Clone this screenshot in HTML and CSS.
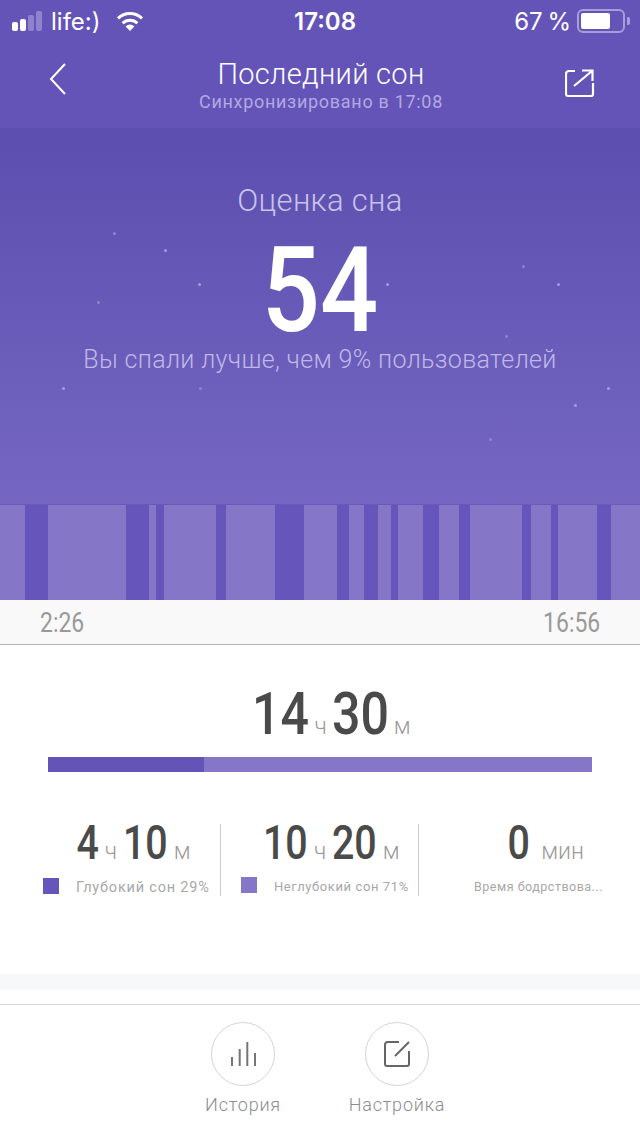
FILE: index.html
```html
<!DOCTYPE html>
<html lang="ru">
  <head>
    <meta charset="UTF-8" />
    <title>Последний сон</title>
    <link rel="stylesheet" href="styles.css">
  </head>
  <body>
    <div class="status">
      <div class="statusLeft">
        <div class="signal"><i></i><i></i><i class="off"></i><i class="off"></i></div>
        <span>life:)</span>
        <svg class="wifi" width="30" height="22" viewBox="0 0 30 22">
          <path d="M15 21l-4.4-4.6a6.2 6.2 0 0 1 8.8 0z" fill="#fff"/>
          <path d="M7.6 13.2a10.5 10.5 0 0 1 14.8 0" fill="none" stroke="#fff" stroke-width="3"/>
          <path d="M3 8.4a17 17 0 0 1 24 0" fill="none" stroke="#fff" stroke-width="3"/>
        </svg>
      </div>
      <div class="clock">17:08</div>
      <div class="statusRight">
        <span class="percent">67 %</span>
        <div class="battery"><div class="charge"></div></div>
        <div class="nub"></div>
      </div>
    </div>

    <div class="nav">
      <svg width="24" height="36" viewBox="0 0 24 36"><path d="M18 3L4 18l14 15" fill="none" stroke="#fff" stroke-width="2"/></svg>
      <div class="navTitle">
        <h1>Последний сон</h1>
        <p>Синхронизировано в 17:08</p>
      </div>
      <svg class="share" width="30" height="30" viewBox="0 0 30 30">
        <path d="M10 3H4a3 3 0 0 0-3 3v20a2 2 0 0 0 2 2h23a2 2 0 0 0 2-2V15" fill="none" stroke="#fff" stroke-width="2.2"/>
        <path d="M9 18L27 3M17 2.5h10.5V13" fill="none" stroke="#fff" stroke-width="2.2"/>
      </svg>
    </div>

    <div class="hero">
      <i class="star faint" style="left:113px;top:232px"></i>
      <i class="star" style="left:164px;top:249px"></i>
      <i class="star" style="left:198px;top:283px"></i>
      <i class="star faint" style="left:97px;top:301px"></i>
      <i class="star" style="left:386px;top:283px"></i>
      <i class="star faint" style="left:522px;top:265px"></i>
      <i class="star" style="left:557px;top:283px"></i>
      <i class="star faint" style="left:505px;top:335px"></i>
      <i class="star" style="left:62px;top:387px"></i>
      <i class="star faint" style="left:199px;top:387px"></i>
      <i class="star" style="left:574px;top:404px"></i>
      <i class="star" style="left:607px;top:387px"></i>
      <i class="star faint" style="left:489px;top:438px"></i>
      <h2>Оценка сна</h2>
      <div class="score">54</div>
      <p>Вы спали лучше, чем 9% пользователей</p>
    </div>

    <div class="chart" id="chart"></div>

    <div class="times"><span>2:26</span><span class="timeEnd">16:56</span></div>

    <div class="summary">
      <div class="total"><b>14</b><small>ч</small><b>30</b><small>м</small></div>
      <div class="ratio"><div class="ratioDeep"></div></div>
      <div class="cols">
        <div class="col colFirst">
          <div class="val"><b class="one">4</b><small>ч</small><b>10</b><small>м</small></div>
          <div class="legend"><i class="sq"></i><span>Глубокий сон 29%</span></div>
        </div>
        <div class="col colMid">
          <div class="val"><b>10</b><small>ч</small><b>20</b><small>м</small></div>
          <div class="legend"><i class="sq sqLight"></i><span>Неглубокий сон 71%</span></div>
        </div>
        <div class="col colLast">
          <div class="val valLast"><b class="one">0</b><small class="min">мин</small></div>
          <div class="legend legendLast"><span>Время бодрствова...</span></div>
        </div>
      </div>
    </div>

    <div class="strip"></div>

    <div class="actions">
      <div class="action">
        <div class="circle">
          <svg width="26" height="26" viewBox="0 0 26 26"><path d="M2 16v9M9.700 8v17M17.300 1v24M25 12v13" fill="none" stroke="#757575" stroke-width="2"/></svg>
        </div>
        <span>История</span>
      </div>
      <div class="action">
        <div class="circle">
          <svg width="28" height="28" viewBox="0 0 28 28">
            <path d="M16 2H5a3 3 0 0 0-3 3v19a2 2 0 0 0 2 2h20a2 2 0 0 0 2-2V11" fill="none" stroke="#666" stroke-width="2"/>
            <path d="M12 16L26 2" fill="none" stroke="#666" stroke-width="2"/>
          </svg>
        </div>
        <span>Настройка</span>
      </div>
    </div>

    <script>
      // light / dark stretches of the sleep chart, in px
      const parts = [25,23,78,23,7,8,52,10,49,29,33,12,15,14,13,7,25,16,20,11,52,9,20,7,39,14,29];
      const chart = document.getElementById("chart");
      parts.forEach((w, i) => {
        const seg = document.createElement("div");
        seg.className = i % 2 ? "seg dark" : "seg";
        seg.style.width = w + "px";
        chart.append(seg);
      });
    </script>
  </body>
</html>
```

FILE: styles.css
```css
* {
  box-sizing: border-box;
}
body {
  margin: 0;
  width: 640px;
  height: 1136px;
  overflow: hidden;
  background: #fff;
  font-family: Roboto, "Noto Sans", sans-serif;
  position: relative;
}
h1, h2, p {
  margin: 0;
  font-weight: normal;
}

/* status bar */
.status {
  height: 40px;
  background: #6454b8;
  color: #fff;
  display: grid;
  grid-template-columns: 1fr auto 1fr;
  align-items: center;
  padding: 2px 10px 0 12px;
  font-family: Inter, Roboto, sans-serif;
  font-size: 24px;
}
.statusLeft, .statusRight {
  display: flex;
  align-items: center;
}
.statusRight {
  justify-content: flex-end;
}
.percent {
  word-spacing: -2px;
}
.signal {
  display: flex;
  align-items: flex-end;
  gap: 2px;
  margin-right: 9px;
}
.signal i {
  display: block;
  width: 6px;
  border-radius: 2px;
  background: #fff;
  height: 9px;
}
.signal i:nth-child(2) { height: 12px; }
.signal i:nth-child(3) { height: 16px; }
.signal i:nth-child(4) { height: 20px; }
.signal .off {
  background: #8f83cf;
}
.wifi {
  margin-left: 15px;
}
.clock {
  font-weight: 600;
  margin-left: 8px;
}
.battery {
  width: 48px;
  height: 24px;
  margin-left: 6px;
  border: 2px solid #a79dda;
  border-radius: 6px;
  padding: 2px;
}
.charge {
  width: 29px;
  height: 100%;
  background: #fff;
  border-radius: 2px;
}
.nub {
  width: 3px;
  height: 8px;
  background: #a79dda;
  border-radius: 0 2px 2px 0;
  margin-left: 2px;
}

/* title */
.nav {
  height: 88px;
  background: #6454b8;
  display: flex;
  justify-content: space-between;
  align-items: center;
  padding: 0 45px 10px 47px;
}
.share {
  margin-top: 8px;
}
.navTitle {
  text-align: center;
  color: #fff;
  margin: 12px 0 0 6px;
}
.navTitle h1 {
  font-size: 29px;
  line-height: 34px;
  font-weight: 300;
  letter-spacing: 0.3px;
}
.navTitle p {
  font-size: 18px;
  line-height: 22px;
  color: #b2a9e1;
  letter-spacing: 0.7px;
}

/* score */
.hero {
  height: 376px;
  background: linear-gradient(#5b4eae, #7566c2);
  text-align: center;
  color: #c9c2ec;
  padding-top: 55px;
}
.hero h2 {
  font-size: 31px;
  line-height: 36px;
  font-weight: 300;
  letter-spacing: 0.3px;
}
.score {
  font-size: 119px;
  font-weight: 500;
  line-height: 96px;
  color: #fff;
  margin: 24px 0 6px;
  transform: scaleX(0.86);
}
.hero p {
  font-size: 25px;
  line-height: 30px;
  font-weight: 300;
  letter-spacing: 0.35px;
  color: #c0b8e8;
}
.star {
  position: absolute;
  width: 3px;
  height: 3px;
  border-radius: 50%;
  background: #a79dda;
}
.faint {
  background: #8f83cf;
}

/* chart */
.chart {
  display: flex;
  height: 96px;
  border-top: 1px solid #6a5abb;
}
.seg {
  background: #8576c8;
}
.dark {
  background: #6656bb;
}
.times {
  height: 45px;
  background: #f9f9f9;
  border-bottom: 1px solid #b4b4b4;
  display: flex;
  justify-content: space-between;
  align-items: center;
  padding: 1px 40px 0;
  font-size: 27px;
  color: #999;
}
.times span {
  transform: scaleX(0.85);
  transform-origin: left;
}
.times .timeEnd {
  transform-origin: right;
}

/* durations */
.summary {
  height: 329px;
  padding: 35px 48px 0;
  color: #4a4a4a;
}
.total, .val {
  display: flex;
  justify-content: center;
  align-items: baseline;
}
.total {
  height: 68px;
  padding-left: 28px;
}
b {
  display: inline-block;
  font-weight: 500;
}
.total b {
  font-size: 59px;
  line-height: 68px;
  transform: scaleX(0.85);
  margin: 0 -5px;
}
small {
  font-weight: 300;
  color: #9b9b9b;
  margin: 0 5px;
}
.total small {
  font-size: 23px;
}
.ratio {
  height: 15px;
  background: #8576c8;
  margin-top: 9px;
}
.ratioDeep {
  width: 156px;
  height: 100%;
  background: #6454b8;
}
.cols {
  display: flex;
  margin: 52px 0 0 -5px;
  width: 562px;
}
.col {
  height: 72px;
}
.colFirst {
  width: 178px;
  border-right: 1px solid #ccc;
}
.colMid {
  width: 198px;
  border-right: 1px solid #ccc;
  padding-left: 20px;
}
.colLast {
  flex: 1;
  padding-left: 55px;
}
.val {
  height: 37px;
  padding-left: 10px;
}
.val b {
  font-size: 48px;
  line-height: 37px;
  transform: scaleX(0.82);
  margin: 0 -5px;
}
.val .one {
  margin: 0 -2.5px;
}
.val small {
  font-size: 23px;
  margin: 0 6px;
}
.valLast {
  padding-left: 18px;
}
.val .min {
  margin-left: 12px;
}
.legend {
  display: flex;
  align-items: center;
  margin-top: 14px;
  font-size: 14.5px;
  letter-spacing: 0.8px;
  color: #a8a8a8;
  white-space: nowrap;
}
.legend span {
  margin-top: 4px;
}
.colMid .legend {
  font-size: 13px;
  letter-spacing: 0.6px;
}
.legendLast {
  font-size: 12.5px;
  letter-spacing: 0.5px;
}
.sq {
  flex: none;
  width: 16px;
  height: 16px;
  background: #6656bb;
  margin-right: 17px;
}
.sqLight {
  background: #8576c8;
}

/* bottom */
.strip {
  height: 16px;
  background: #f7f8fa;
}
.actions {
  margin-top: 14px;
  height: 132px;
  border-top: 1px solid #d9d9d9;
  display: flex;
  justify-content: center;
  gap: 66px;
  padding-top: 17px;
}
.action {
  width: 88px;
  display: flex;
  flex-direction: column;
  align-items: center;
  font-size: 18px;
  font-weight: 300;
  letter-spacing: 0.8px;
  color: #8c8c8c;
  white-space: nowrap;
}
.circle {
  width: 64px;
  height: 64px;
  border: 1px solid #d5d5d5;
  border-radius: 50%;
  display: flex;
  justify-content: center;
  align-items: center;
  margin-bottom: 8px;
}
```
